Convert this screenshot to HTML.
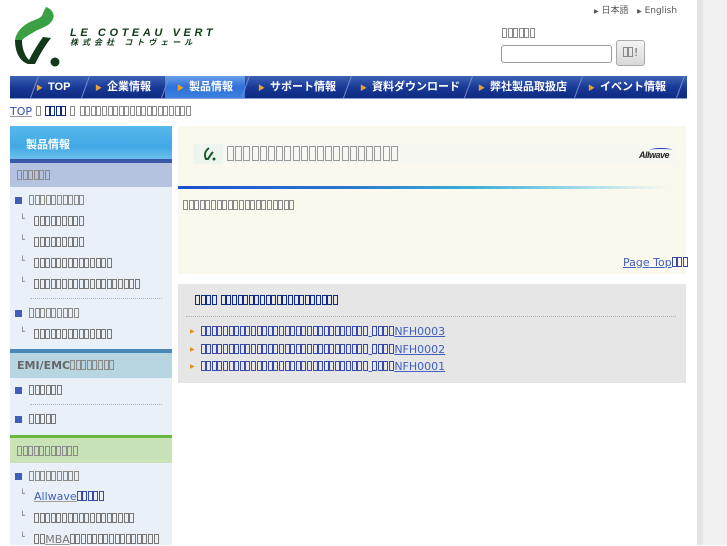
<!DOCTYPE html>
<html><head><meta charset="utf-8">
<style>
*{margin:0;padding:0;box-sizing:border-box}
body{width:727px;height:545px;overflow:hidden;background:#fff;font-family:"DejaVu Sans","Noto Sans CJK JP",sans-serif;font-size:11px;color:#666;position:relative}
.a{position:absolute}
.q{display:inline-block;width:5px;height:10px;border:1px solid #8a8a8a;margin-right:.6px;vertical-align:-1px}
a .q{border-color:#777}
.bl .q{border-color:#3a4aa8}
.nv .q{border-color:#102a80}
.big .q{width:7px;height:15px;margin-right:1.2px;border-color:#999}
a{color:#444;text-decoration:underline;text-decoration-color:#999}
.nav{left:10px;top:76px;width:677px;height:23px;background:linear-gradient(#3c63b5,#1a3a98 50%,#0e2a80);border-bottom:1px solid #8aa0d0}
.nav span{position:absolute;top:0;height:22px;line-height:22px;color:#fff;font-weight:bold;font-size:11px;font-family:"Liberation Sans","Noto Sans CJK JP",sans-serif}
.nav i{position:absolute;top:0;width:1px;height:22px;background:#7a8fc8;transform:skewX(-20deg)}
.nav b{color:#e8a030;font-size:7px;margin-right:5px}
.sb{left:10px;width:162px}
.li{position:absolute;left:18px;font-size:11px;color:#444}
.li.sq::before{content:"";position:absolute;left:-2px;top:3px;width:7px;height:7px;background:#4060b8}
.sub{position:absolute;left:20px;font-size:11px}
.sub::before{content:"└";position:absolute;left:-1px;top:-1px;font-size:8px;color:#666}
.sub a{margin-left:13px}
.dot{position:absolute;left:20px;width:132px;border-top:1px dotted #a8b8d8}
</style></head><body>
<svg class="a" style="left:12px;top:6px" width="52" height="62" viewBox="0 0 52 62">
<path d="M34 1 C40 3 44 9 40 15 C36 21 28 22 22 26 C17 29 13 31 10 34 L3 34 C4 27 9 21 16 17 C23 13 30 13 31 7 Z" fill="#3aa043"/>
<path d="M3 34 L10 34 C10 43 13 50 17 54 C21 46 26 38 31 31 L39 32 C32 41 27 50 23 58 L16 58 C7 55 3 45 3 34 Z" fill="#123a1a"/>
<circle cx="43" cy="56" r="4.5" fill="#123a1a"/>
</svg>
<div class="a" style="left:70px;top:27px;font:italic bold 11px 'Liberation Sans',sans-serif;color:#123a1a;letter-spacing:3.6px">LE COTEAU VERT</div>
<div class="a" style="left:70px;top:37px;font:italic bold 8px 'Liberation Sans','Noto Sans CJK JP',sans-serif;color:#123a1a;letter-spacing:4px">株式会社 コトヴェール</div>
<div class="a" style="left:594px;top:3px;font-size:9px;color:#555"><span style="font-size:6px">▶</span> 日本語 &nbsp;&nbsp;<span style="font-size:6px">▶</span> English</div>
<div class="a" style="left:502px;top:27px;font-size:11px">□□□□□□</div>
<div class="a" style="left:501px;top:45px;width:111px;height:18px;border:1px solid #999;border-radius:3px;background:#fff"></div>
<div class="a" style="left:616px;top:40px;width:29px;height:26px;border:1px solid #aaa;border-radius:3px;background:linear-gradient(#f4f4f4,#d8d8d8);font-size:11px;color:#666;text-align:center;line-height:24px">□□!</div>
<div class="a" style="left:697px;top:0;width:6px;height:545px;background:#e4e4e4"></div>
<div class="a" style="left:703px;top:0;width:24px;height:545px;background:#f0f0f0"></div>
<div class="a nav">
<div class="a" style="left:155px;top:0;width:80px;height:22px;background:linear-gradient(#6aa0e8,#2f70d8 50%,#3a80e0)"></div>
<i style="left:24px"></i><i style="left:75px"></i><i style="left:155px"></i><i style="left:235px"></i><i style="left:337px"></i><i style="left:458px"></i><i style="left:568px"></i><i style="left:670px"></i>
<span style="left:26px"><b>▶</b>TOP</span>
<span style="left:85px"><b>▶</b>企業情報</span>
<span style="left:167px"><b>▶</b>製品情報</span>
<span style="left:248px"><b>▶</b>サポート情報</span>
<span style="left:350px"><b>▶</b>資料ダウンロード</span>
<span style="left:468px"><b>▶</b>弊社製品取扱店</span>
<span style="left:578px"><b>▶</b>イベント情報</span>
</div>
<div class="a" style="left:10px;top:105px;font-size:11px"><a href="#" style="color:#3050b0">TOP</a> □ <a href="#" class="nv" style="color:#2040a0">□□□□</a> □ □□□□□□□□□□□□□□□□□□□□</div>
<div class="a sb" style="top:126px;height:34px;background:linear-gradient(#58b8ec,#40a8e4 60%,#70c0ec);"></div>
<div class="a" style="left:26px;top:136px;font-weight:bold;color:#fff;font-size:11px;font-family:'Liberation Sans','Noto Sans CJK JP',sans-serif">製品情報</div>
<div class="a sb" style="top:159px;height:4px;background:#3a58a8"></div>
<div class="a sb" style="top:163px;height:24px;background:#b6c3e0"></div>
<div class="a" style="left:17px;top:169px;font-size:11px">□□□□□□</div>
<div class="a sb" style="top:187px;height:162px;background:#e9f0f7">
 <div class="li sq" style="top:7px;left:7px;padding-left:12px">□□□□□□□□□□</div>
 <div class="sub" style="top:28px;left:11px"><a>□□□□□□□□□</a></div>
 <div class="sub" style="top:49px;left:11px"><a>□□□□□□□□□</a></div>
 <div class="sub" style="top:70px;left:11px"><a>□□□□□□□□□□□□□□</a></div>
 <div class="sub" style="top:91px;left:11px"><a>□□□□□□□□□□□□□□□□□□□</a></div>
 <div class="dot" style="top:111px"></div>
 <div class="li sq" style="top:120px;left:7px;padding-left:12px">□□□□□□□□□</div>
 <div class="sub" style="top:141px;left:11px"><a>□□□□□□□□□□□□□□</a></div>
</div>
<div class="a sb" style="top:349px;height:4px;background:#4a88b8"></div>
<div class="a sb" style="top:353px;height:25px;background:#b8d6e2"></div>
<div class="a" style="left:17px;top:359px;font-size:11px;font-weight:bold">EMI/EMC<span style="font-weight:normal">□□□□□□□□</span></div>
<div class="a sb" style="top:378px;height:57px;background:#e9f0f7">
 <div class="li sq" style="top:6px;left:7px;padding-left:12px"><a>□□□□□□</a></div>
 <div class="dot" style="top:26px"></div>
 <div class="li sq" style="top:35px;left:7px;padding-left:12px"><a>□□□□□</a></div>
</div>
<div class="a sb" style="top:435px;height:3px;background:#6ab840"></div>
<div class="a sb" style="top:438px;height:25px;background:#c9e2b8"></div>
<div class="a" style="left:17px;top:445px;font-size:11px">□□□□□□□□□□□</div>
<div class="a sb" style="top:463px;height:82px;background:#e9f0f7">
 <div class="li sq" style="top:7px;left:7px;padding-left:12px">□□□□□□□□□</div>
 <div class="sub" style="top:27px;left:11px"><a class="bl" style="color:#4060c0">Allwave□□□□□</a></div>
 <div class="sub" style="top:49px;left:11px"><a>□□□□□□□□□□□□□□□□□□</a></div>
 <div class="sub" style="top:70px;left:11px"><a style="color:#777">□□MBA□□□□□□□□□□□□□□□□</a></div>
</div>
<div class="a" style="left:178px;top:126px;width:508px;height:148px;background:#fbf8ee"></div>
<div class="a" style="left:193px;top:144px;width:482px;height:20px;background:#f8f8f2"></div>
<div class="a" style="left:193px;top:144px;width:30px;height:20px;background:#eef5ee"></div>
<svg class="a" style="left:202px;top:147px" width="14" height="14" viewBox="0 0 14 14"><path d="M7 1 C3 4 2 8 4 12 L6 12 C8 9 9 7 11 5" fill="none" stroke="#1a5a2a" stroke-width="2"/><circle cx="12" cy="12" r="1.5" fill="#1a5a2a"/></svg>
<div class="a big" style="left:227px;top:146px;font-size:15px">□□□□□□□□□□□□□□□□□□□□□</div>
<div class="a" style="left:639px;top:150px;font:italic bold 9px 'Liberation Sans',sans-serif;color:#222;letter-spacing:-0.5px">Allwave</div>
<div class="a" style="left:650px;top:148px;width:22px;height:4px;border-top:1px solid #2040c0;border-radius:50%"></div>
<div class="a" style="left:178px;top:186px;width:490px;height:3px;background:linear-gradient(90deg,#1e50d0,#2a78d0 35%,#3ab0d8 60%,#b0e0ec 85%,#fbf8ee)"></div>
<div class="a" style="left:183px;top:199px;font-size:11px">□□□□□□□□□□□□□□□□□□□□</div>
<div class="a" style="left:623px;top:256px;font-size:11px"><a class="bl" style="color:#4060c0;text-decoration-color:#4060c0">Page Top□□□</a></div>
<div class="a" style="left:178px;top:284px;width:508px;height:99px;background:#e6e6e6"></div>
<div class="a nv" style="left:195px;top:294px;font-size:11px;color:#102a80">□□□□ □□□□□□□□□□□□□□□□□□□□□</div>
<div class="a" style="left:186px;top:316px;width:490px;border-top:1px dotted #a0b4e0"></div>
<div class="a bl" style="left:190px;top:323px;font-size:11px;line-height:17.5px">
<div><span style="color:#e09020;font-size:6px;margin-right:6px;vertical-align:2px">▶</span><a style="color:#4060c0;text-decoration-color:#4060c0">□□□□□□□□□□□□□□□□□□□□□□□□□□□□□□ □□□□NFH0003</a></div>
<div><span style="color:#e09020;font-size:6px;margin-right:6px;vertical-align:2px">▶</span><a style="color:#4060c0;text-decoration-color:#4060c0">□□□□□□□□□□□□□□□□□□□□□□□□□□□□□□ □□□□NFH0002</a></div>
<div><span style="color:#e09020;font-size:6px;margin-right:6px;vertical-align:2px">▶</span><a style="color:#4060c0;text-decoration-color:#4060c0">□□□□□□□□□□□□□□□□□□□□□□□□□□□□□□ □□□□NFH0001</a></div>
</div>
<script>
(function(){
var w=document.createTreeWalker(document.body,NodeFilter.SHOW_TEXT),n,l=[];
while(n=w.nextNode()){if(n.nodeValue.indexOf('□')>=0&&n.parentNode.nodeName!=='SCRIPT')l.push(n);}
l.forEach(function(t){var f=document.createDocumentFragment();
t.nodeValue.split('').forEach(function(c){if(c==='□'){var s=document.createElement('span');s.className='q';s.title='□';f.appendChild(s);}else f.appendChild(document.createTextNode(c));});
t.parentNode.replaceChild(f,t);});
})();
</script>
</body></html>
